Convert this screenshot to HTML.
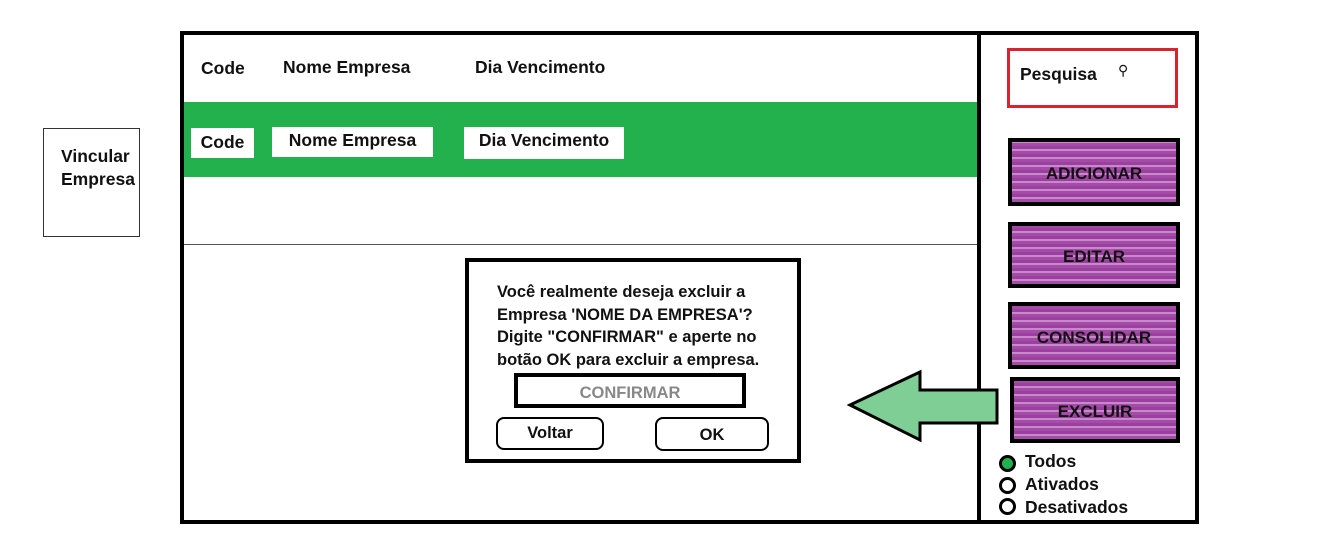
<!DOCTYPE html>
<html><head><style>
*{margin:0;padding:0;box-sizing:border-box}
body{width:1326px;height:547px;background:#fff;position:relative;font-family:"Liberation Sans",sans-serif;font-weight:bold;font-size:17.5px;color:#111;overflow:hidden}
.a{position:absolute}
.pb{position:absolute;border:4px solid #000;background:repeating-linear-gradient(0deg,#a54ca8 0 3px,#c58ac8 3px 5px,#9c3fa0 5px 8px);display:flex;align-items:center;justify-content:center;font-size:17px}
.wl{background:#fff;padding:2px 6px}
.rad{position:absolute;width:17px;height:17px;border:3px solid #000;border-radius:50%}
</style></head><body>
<div class="a" style="left:43px;top:128px;width:97px;height:109px;border:1px solid #333"></div>
<div class="a" style="left:61px;top:145px;line-height:23px">Vincular<br>Empresa</div>

<div class="a" style="left:180px;top:31px;width:1019px;height:493px;border:4px solid #000"></div>
<div class="a" style="left:977px;top:31px;width:4px;height:493px;background:#000"></div>
<div class="a" style="left:184px;top:102px;width:793px;height:75px;background:#22b14c"></div>
<div class="a" style="left:184px;top:244px;width:793px;height:1px;background:#555"></div>
<div class="a" style="left:201px;top:58px">Code</div>
<div class="a" style="left:283px;top:57px">Nome Empresa</div>
<div class="a" style="left:475px;top:57px">Dia Vencimento</div>
<div class="a wl" style="left:191px;top:128px;height:30px;padding-top:4px;width:63px;text-align:center">Code</div>
<div class="a wl" style="left:272px;top:127px;height:30px;padding-top:3px;width:161px;text-align:center">Nome Empresa</div>
<div class="a wl" style="left:464px;top:127px;height:32px;padding-top:3px;width:160px;text-align:center">Dia Vencimento</div>

<div class="a" style="left:465px;top:258px;width:336px;height:205px;border:4px solid #000"></div>
<div class="a" style="left:497px;top:281px;line-height:22.5px;font-size:16.5px">Você realmente deseja excluir a<br>Empresa 'NOME DA EMPRESA'?<br>Digite "CONFIRMAR" e aperte no<br>botão OK para excluir a empresa.</div>
<div class="a" style="left:514px;top:373px;width:232px;height:35px;border:4px solid #000;color:#888;text-align:center;padding-top:7px;font-size:16.5px">CONFIRMAR</div>
<div class="a" style="left:496px;top:417px;width:108px;height:33px;border:2px solid #000;border-radius:8px;text-align:center;padding-top:5px;font-size:16.5px">Voltar</div>
<div class="a" style="left:655px;top:417px;width:114px;height:34px;border:2px solid #000;border-radius:8px;text-align:center;padding-top:7px;font-size:16.5px">OK</div>

<svg class="a" style="left:845px;top:368px" width="160" height="78"><polygon points="5,37 75,4 75,22 152,22 152,55 75,55 75,72" fill="#7fce96" stroke="#000" stroke-width="3"/></svg>

<div class="a" style="left:1007px;top:48px;width:171px;height:60px;border:3px solid #d9232e"></div>
<div class="a" style="left:1020px;top:64px">Pesquisa</div>
<div class="a" style="left:1118px;top:62px;font-size:14px;font-weight:normal">⚲</div>
<div class="pb" style="left:1008px;top:138px;width:172px;height:68px;padding-top:4px">ADICIONAR</div>
<div class="pb" style="left:1008px;top:222px;width:172px;height:66px;padding-top:4px">EDITAR</div>
<div class="pb" style="left:1008px;top:302px;width:172px;height:67px;padding-top:4px">CONSOLIDAR</div>
<div class="pb" style="left:1010px;top:377px;width:170px;height:66px;padding-top:4px">EXCLUIR</div>
<div class="rad" style="left:999px;top:455px;background:#22b14c"></div>
<div class="rad" style="left:999px;top:477px"></div>
<div class="rad" style="left:999px;top:498px"></div>
<div class="a" style="left:1025px;top:451px">Todos</div>
<div class="a" style="left:1025px;top:474px">Ativados</div>
<div class="a" style="left:1025px;top:497px">Desativados</div>
</body></html>
